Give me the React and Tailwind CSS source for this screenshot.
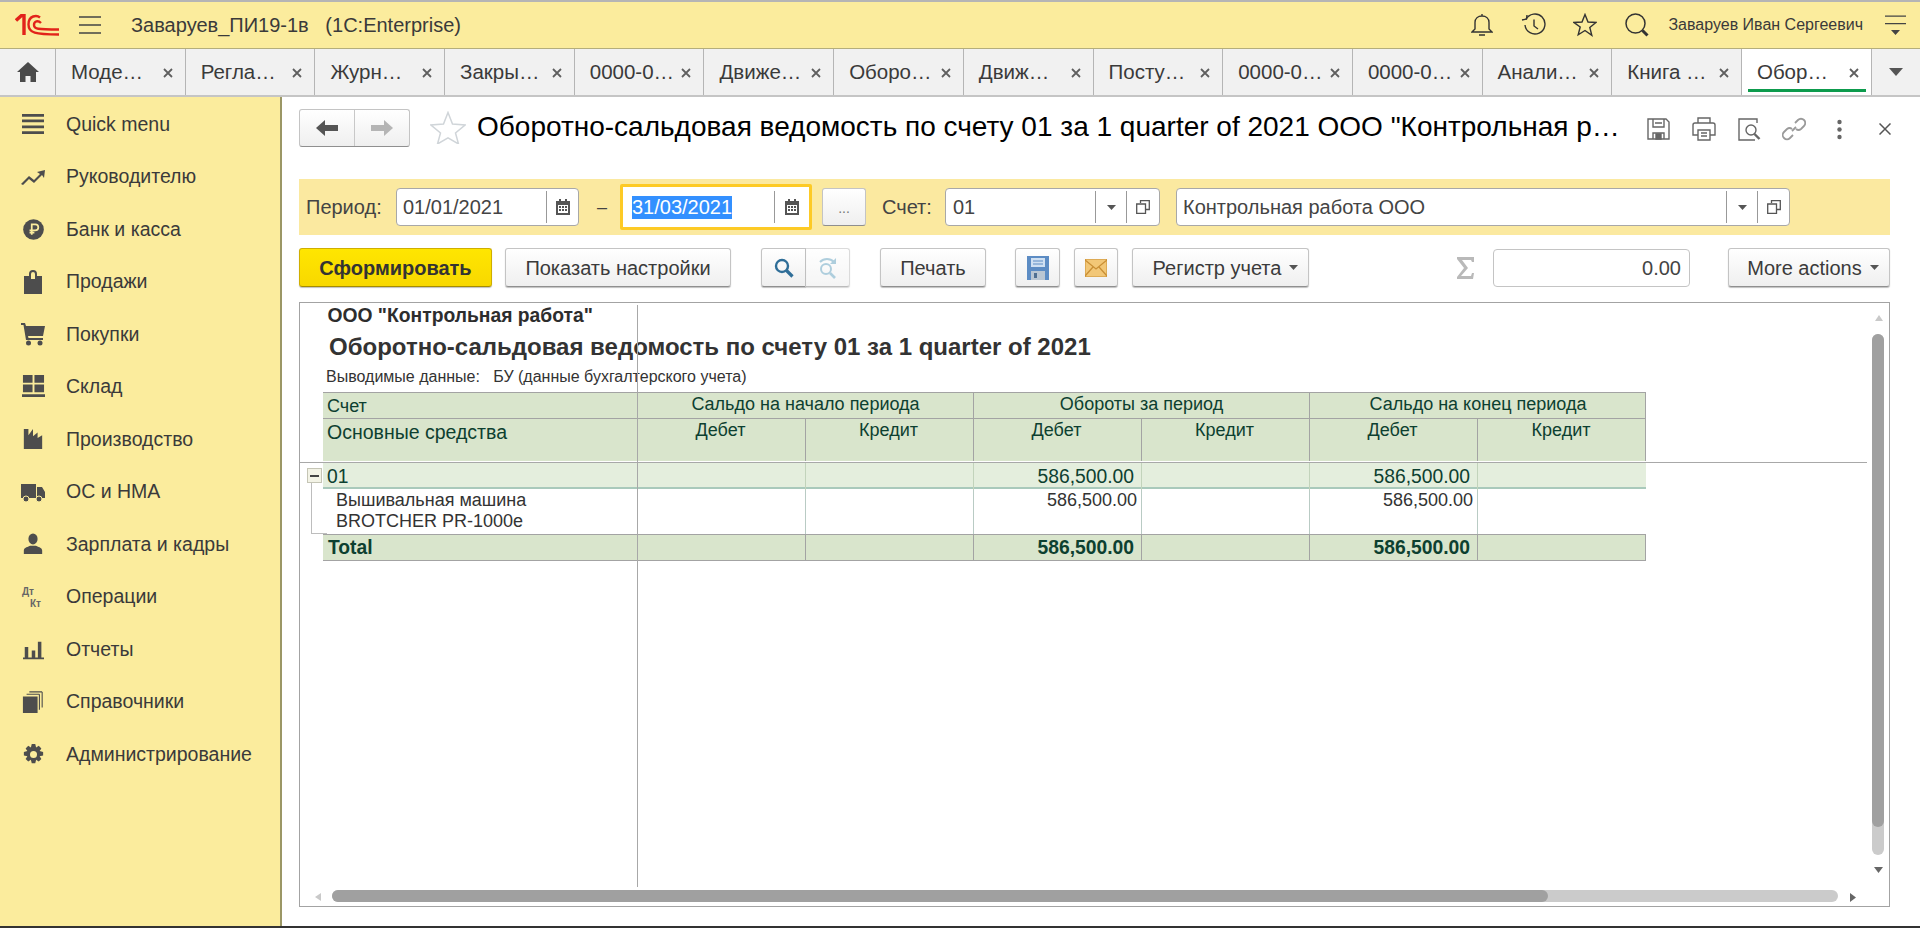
import React from 'react';

const FONT = { fontFamily: '"Liberation Sans", Arial, sans-serif' };

const tabs = ['Моде…', 'Регла…', 'Журн…', 'Закры…', '0000-0…', 'Движе…', 'Оборо…', 'Движ…', 'Посту…', '0000-0…', '0000-0…', 'Анали…', 'Книга …', 'Обор…'];

const IconWrap = ({ size = 24, children }) => (
  <svg viewBox="0 0 24 24" width={size} height={size} fill="#4d4d4d">{children}</svg>
);

const menu = [
  ['Quick menu', <IconWrap size={22}><path d="M0 1h24v3H0zM0 7h24v3H0zM0 13.500h24v3H0zM0 20h24v3H0z" /></IconWrap>],
  ['Руководителю', <IconWrap><path d="M0 19l8-8 5 4 6-6-3-2 8-2-1 8-2-3-8 8-5-4-6 6z" /></IconWrap>],
  ['Банк и касса', <IconWrap size={21}><circle cx="12" cy="12" r="11.800" /><path d="M10 18V6h4a3.500 3.500 0 0 1 0 7H7.500M7.500 15.500H13" fill="none" stroke="#fbec9d" strokeWidth="2" /></IconWrap>],
  ['Продажи', <IconWrap><path d="M3 6h5V4a4 4 0 0 1 8 0v2h5v18H3zM10 6v3h4V4a2 2 0 0 0-4 0z" fillRule="evenodd" /></IconWrap>],
  ['Покупки', <IconWrap><path d="M0 1h4l1 3h19l-2 10H7l.5 2H22v2H5L2.500 3H0z" /><circle cx="7.500" cy="21" r="2.500" /><circle cx="19" cy="21" r="2.500" /></IconWrap>],
  ['Склад', <IconWrap size={23}><path d="M1 0h10v8H1zM13 0h10v8H13zM1 10h10v8H1zM13 10h10v8H13zM0 20h24v3H0z" /></IconWrap>],
  ['Производство', <IconWrap size={22}><path d="M2 23V1h5v7l5-7v8l5-4v6l5-3v15z" /></IconWrap>],
  ['ОС и НМА', <IconWrap><path d="M0 4h15v14H0zM16 7h5l3 5v6h-8z" /><circle cx="5" cy="19" r="3" stroke="#fbec9d" /><circle cx="18" cy="19" r="3" stroke="#fbec9d" /></IconWrap>],
  ['Зарплата и кадры', <IconWrap size={22}><ellipse cx="12" cy="6.500" rx="5" ry="6" /><path d="M2 23v-4c0-3 5-4 7-5h6c2 1 7 2 7 5v4z" /></IconWrap>],
  ['Операции', <svg width="24" height="24" viewBox="0 0 24 24"><text x="1" y="10" fontSize="10" fontWeight="700" fill="#666" style={FONT}>Дт</text><text x="9" y="22" fontSize="10" fontWeight="700" fill="#666" style={FONT}>Кт</text></svg>],
  ['Отчеты', <IconWrap size={21}><path d="M2 9h4v12H2zM10 13h4v8h-4zM17 3h4v18h-4zM0 21h24v2H0z" /></IconWrap>],
  ['Справочники', <IconWrap size={22}><path d="M1 6h16v18H1z" /><path d="M19 3.500v17M22 1v17M5 3.500h14M8 1h14" fill="none" stroke="#4d4d4d" strokeWidth="1.200" /></IconWrap>],
  ['Администрирование', <IconWrap size={21}><path d="M10 0h4l1 4 3-2 3 3-2 3 4 1v4l-4 1 2 3-3 3-3-2-1 4h-4l-1-4-3 2-3-3 2-3-4-1v-4l4-1-2-3 3-3 3 2z" /><circle cx="12" cy="12" r="4" fill="#fbec9d" /></IconWrap>],
];

const Btn = ({ className = '', children }) => (
  <div className={`flex items-center justify-center h-[39px] shrink-0 rounded-[3px] border border-[#c4c4c4] border-b-[#8f8f8f] bg-gradient-to-b from-white to-[#efefef] shadow-[0_1px_1px_rgba(0,0,0,0.25)] text-[20px] text-[#3b3b3b] ${className}`}>
    {children}
  </div>
);

const Calendar = () => (
  <svg width="14" height="16" viewBox="0 0 14 16" fill="#555">
    <path d="M0 2h3V0h2v2h4V0h2v2h3v14H0zM2 6v8h10V6z" fillRule="evenodd" />
    <path d="M3 7h2v2H3zM6 7h2v2H6zM9 7h2v2H9zM3 10h2v2H3zM6 10h2v2H6zM9 10h2v2H9z" />
  </svg>
);

const CopyIcon = () => (
  <svg width="14" height="14" viewBox="0 0 14 14" fill="none" stroke="#555" strokeWidth="1.300">
    <path d="M4.500 3V.7h8.800v8.800H10" />
    <path d="M.7 4h8.800v9.300H.7z" />
  </svg>
);

const Caret = ({ color = '#555' }) => (
  <svg width="9" height="5" viewBox="0 0 9 5" fill={color}><path d="M0 0h9L4.500 5z" /></svg>
);

const Cell = ({ className = '', children }) => (
  <div className={`min-w-0 whitespace-nowrap overflow-visible ${className}`}>{children}</div>
);

export default function App() {
  return (
    <div style={FONT} className="w-[1920px] h-[928px] overflow-hidden flex flex-col bg-white text-[#333]">
      {/* шапка */}
      <header className="h-[49px] shrink-0 flex items-center bg-[#fbec9d] border-t-2 border-t-[#b5b5b5] border-b border-b-[#b4ae7c]">
        <svg className="ml-[15px] shrink-0" width="44" height="22" viewBox="0 0 44 22" fill="none" stroke="#e2231a">
          <path d="M1 6.500 6.500 1.500H9V21" strokeWidth="3.400" />
          <path d="M25 3.500C22 1 13.500 1 13.500 10.500C13.500 19 20 20.500 44 20.500" strokeWidth="2.400" />
          <path d="M26 9C23 6 19 7 19 11C19 15 22 15.500 44 15.500" strokeWidth="2.400" />
        </svg>
        <svg className="ml-[20px] shrink-0" width="22" height="18" viewBox="0 0 22 18" stroke="#444" strokeWidth="1.500"><path d="M0 1h22M0 9h22M0 17h22" /></svg>
        <span className="ml-[30px] text-[20px] whitespace-pre text-[#3a3a3a]">Заваруев_ПИ19-1в   (1С:Enterprise)</span>
        <div className="flex-1" />
        <svg width="22" height="24" viewBox="0 0 22 24" fill="none" stroke="#333" strokeWidth="1.400"><path d="M11 1v2M4 16V9.500C4 5.500 7 3 11 3s7 2.500 7 6.500V16l3 3H1zM8 22h6" /></svg>
        <svg className="ml-[28px]" width="25" height="24" viewBox="0 0 25 24" fill="none" stroke="#333" strokeWidth="1.400"><path d="M5 6.500A10 10 0 1 1 4 12" /><path d="M1 7l4.500-1L6 2" /><path d="M13 6.500V13l4 3" /></svg>
        <svg className="ml-[27px]" width="24" height="24" viewBox="0 0 24 24" fill="none" stroke="#333" strokeWidth="1.400"><path d="M12 1.500l3 7.500 8 .5-6.200 5 2 7.800L12 17.500l-6.800 4.300 2-7.800L1 9.500 9 9z" /></svg>
        <svg className="ml-[28px]" width="24" height="24" viewBox="0 0 24 24" fill="none" stroke="#333" strokeWidth="1.500"><circle cx="10.500" cy="10.500" r="9.500" /><path d="M17.500 17.500l5 5" strokeWidth="3" /></svg>
        <span className="ml-[19px] text-[16px] text-[#3a3a3a] whitespace-nowrap">Заваруев Иван Сергеевич</span>
        <svg className="ml-[22px] mr-[14px]" width="21" height="21" viewBox="0 0 21 21" fill="#444"><path d="M0 .5h21v1.300H0zM0 8h21v1.300H0zM6 15h9l-4.500 5z" /></svg>
      </header>

      {/* вкладки */}
      <nav className="h-[48px] shrink-0 flex bg-[#f1f1f1] border-b-2 border-b-[#c5c5c5]">
        <div className="w-[56px] shrink-0 flex items-center justify-center border-r border-r-[#b5b5b5]">
          <svg width="22" height="20" viewBox="0 0 22 20" fill="#4a4a4a"><path d="M11 0 22 10h-3v10h-5.500v-6h-5v6H3V10H0z" /></svg>
        </div>
        {tabs.map((t, i) => {
          const active = i === tabs.length - 1;
          return (
            <div key={i} className={`relative w-[129.700px] shrink-0 flex items-center pl-[15px] border-r border-r-[#b5b5b5] ${active ? 'bg-white' : ''}`}>
              <span className="text-[20.500px] text-[#3a3a3a] whitespace-nowrap">{t}</span>
              <svg className="absolute right-[12px] top-[19px]" width="10" height="10" viewBox="0 0 10 10" stroke="#5f5f5f" strokeWidth="1.800"><path d="M1 1l8 8M9 1l-8 8" /></svg>
              {active && <div className="absolute left-[6px] right-[5px] bottom-[3px] h-[3px] bg-[#0d9b4d]" />}
            </div>
          );
        })}
        <div className="flex-1 flex items-center justify-center"><svg width="14" height="8" viewBox="0 0 14 8" fill="#555"><path d="M0 0h14L7 8z" /></svg></div>
      </nav>

      <div className="flex-1 min-h-0 flex">
        {/* меню разделов */}
        <aside className="w-[282px] shrink-0 bg-[#fbec9d] border-r-2 border-r-[#9b9765] pt-[1px]">
          {menu.map(([label, icon]) => (
            <div key={label} className="h-[52.500px] flex items-center">
              <div className="w-[21px]" />
              <div className="w-[24px] flex items-center justify-center">{icon}</div>
              <span className="ml-[21px] text-[19.500px] text-[#3a3a3a] whitespace-nowrap">{label}</span>
            </div>
          ))}
        </aside>

        {/* форма отчета */}
        <main className="flex-1 min-w-0 pl-[17px] pr-[30px] flex flex-col">
          <div className="h-[82px] shrink-0 flex items-start">
            <div className="mt-[12px] w-[111px] h-[38px] flex rounded-[3px] border border-[#c4c4c4] border-b-[#8f8f8f] bg-gradient-to-b from-white to-[#efefef]">
              <div className="w-[55px] flex items-center justify-center border-r border-r-[#c8c8c8]">
                <svg width="22" height="16" viewBox="0 0 22 16" fill="#555"><path d="M9 0v5h13v6H9v5L0 8z" /></svg>
              </div>
              <div className="flex-1 flex items-center justify-center">
                <svg width="22" height="16" viewBox="0 0 22 16" fill="#b5b5b5"><path d="M13 0v5H0v6h13v5l9-8z" /></svg>
              </div>
            </div>
            <svg className="ml-[20px] mt-[14px] shrink-0" width="36" height="33" viewBox="0 0 36 33" fill="none" stroke="#d0d5d9" strokeWidth="1.500"><path d="M18 1.500l4.500 11.500 12.500 1-9.500 8 3 11-10.500-6.200L7.500 33l3-11L1 14l12.500-1z" /></svg>
            <h1 className="ml-[11px] mt-[13px] text-[28px] leading-[34px] font-normal text-black whitespace-nowrap">Оборотно-сальдовая ведомость по счету 01 за 1 quarter of 2021 ООО "Контрольная р…</h1>
            <div className="flex-1" />
            <div className="mt-[20px] flex items-center -mr-[1px]">
              <svg width="23" height="22" viewBox="0 0 23 22" fill="none" stroke="#666" strokeWidth="1.400"><path d="M1 1h18l3 3v17H1zM6 1v8h11V1M8 5h7M6 21v-6h11v6" /><path d="M9 16h5v5H9z" fill="#666" /></svg>
              <svg className="ml-[22px]" width="24" height="24" viewBox="0 0 24 24" fill="none" stroke="#666" strokeWidth="1.400"><path d="M6 6V1h12v5M6 18H1V8a2 2 0 0 1 2-2h18a2 2 0 0 1 2 2v10h-5" /><path d="M6 13h12v10H6zM9 16h6M9 19h6" /></svg>
              <svg className="ml-[22px]" width="24" height="23" viewBox="0 0 24 23" fill="none" stroke="#666" strokeWidth="1.400"><path d="M19 5V1H1v21h16" /><circle cx="13" cy="12" r="5" /><path d="M16.500 16l5 5" strokeWidth="2.400" /></svg>
              <svg className="ml-[20px]" width="24" height="24" viewBox="0 0 24 24" fill="none" stroke="#9a9a9a" strokeWidth="1.800"><path d="M10 14l4-4M13 6l3-3a4 4 0 0 1 6 6l-3 3a4 4 0 0 1-5 0M11 18l-3 3a4 4 0 0 1-6-6l3-3a4 4 0 0 1 5 0" /></svg>
              <svg className="ml-[31px]" width="5" height="21" viewBox="0 0 5 21" fill="#666"><circle cx="2.500" cy="3" r="2.200" /><circle cx="2.500" cy="10.500" r="2.200" /><circle cx="2.500" cy="18" r="2.200" /></svg>
              <svg className="ml-[37px]" width="12" height="12" viewBox="0 0 12 12" stroke="#555" strokeWidth="1.500"><path d="M.5.5l11 11M11.500.5l-11 11" /></svg>
            </div>
          </div>

          {/* отбор */}
          <div className="h-[56px] shrink-0 flex items-center bg-[#fbe9a0] pl-[7px]">
            <span className="w-[90px] text-[20px] text-[#444]">Период:</span>
            <div className="w-[183px] h-[38px] flex rounded-[4px] border border-[#a8a8a8] bg-white">
              <div className="w-[150px] pl-[6px] flex items-center border-r border-r-[#999] text-[20px] text-[#444] my-[2px]">01/01/2021</div>
              <div className="flex-1 flex items-center justify-center"><Calendar /></div>
            </div>
            <span className="ml-[18px] w-[23px] text-[18px] text-[#444]">–</span>
            <div className="w-[192px] h-[46px] flex rounded-[2px] border-[3px] border-[#fdca25] bg-white">
              <div className="w-[152px] pl-[9px] flex items-center border-r border-r-[#999] my-[4px]">
                <span className="bg-[#3390ff] text-white text-[20px] leading-[23px] px-0">31/03/2021</span>
              </div>
              <div className="flex-1 flex items-center justify-center"><Calendar /></div>
            </div>
            <div className="ml-[10px] w-[44px] h-[38px] flex items-end justify-center pb-[6px] rounded-[3px] border border-[#c4c4c4] border-b-[#8f8f8f] bg-gradient-to-b from-white to-[#efefef] text-[14px] text-[#777]">...</div>
            <span className="ml-[16px] w-[63px] text-[20px] text-[#444]">Счет:</span>
            <div className="w-[215px] h-[38px] flex rounded-[4px] border border-[#a8a8a8] bg-white">
              <div className="w-[150px] pl-[7px] flex items-center border-r border-r-[#999] my-[2px] text-[20px] text-[#444]">01</div>
              <div className="w-[31px] flex items-center justify-center border-r border-r-[#999] my-[2px]"><Caret /></div>
              <div className="flex-1 flex items-center justify-center"><CopyIcon /></div>
            </div>
            <div className="ml-[16px] w-[614px] h-[38px] flex rounded-[4px] border border-[#a8a8a8] bg-white">
              <div className="w-[550px] pl-[6px] flex items-center border-r border-r-[#999] my-[2px] text-[20px] text-[#444]">Контрольная работа ООО</div>
              <div className="w-[31px] flex items-center justify-center border-r border-r-[#999] my-[2px]"><Caret /></div>
              <div className="flex-1 flex items-center justify-center"><CopyIcon /></div>
            </div>
          </div>

          {/* кнопки */}
          <div className="h-[67px] shrink-0 flex items-start pt-[13px]">
            <div className="w-[193px] h-[39px] flex items-center justify-center rounded-[3px] border border-[#cfae00] border-b-[#a58c00] bg-gradient-to-b from-[#ffe600] to-[#f8d800] shadow-[0_1px_1px_rgba(0,0,0,0.25)] text-[20px] font-bold text-[#333]">Сформировать</div>
            <Btn className="ml-[13px] w-[226px]">Показать настройки</Btn>
            <Btn className="ml-[30px] w-[45px] rounded-r-none">
              <svg width="20" height="20" viewBox="0 0 20 20" fill="none" stroke="#2f6e98" strokeWidth="2.400"><circle cx="8" cy="8" r="6" /><path d="M12.500 12.500l6 6" strokeWidth="3.200" /></svg>
            </Btn>
            <Btn className="w-[44px] rounded-l-none border-l-0 opacity-60">
              <svg width="22" height="22" viewBox="0 0 22 22" fill="none" stroke="#7aaec8" strokeWidth="2"><circle cx="9" cy="12" r="5" /><path d="M13 16l5 5" strokeWidth="2.600" /><path d="M3 5C7 1 13 1 17 5" /><path d="M19 1v6h-6" fill="#7aaec8" stroke="none" /></svg>
            </Btn>
            <Btn className="ml-[30px] w-[106px]">Печать</Btn>
            <Btn className="ml-[29px] w-[45px]">
              <svg width="22" height="24" viewBox="0 0 22 24"><path d="M0 0h22v24H0z" fill="#5c8cc4" /><path d="M4 2h14v9H4z" fill="#cfe0f2" /><path d="M6 5h10M6 8h10" stroke="#5c8cc4" /><path d="M4 15h14v9H4z" fill="#b9c6d3" /><path d="M7 17h3v5H7z" fill="#4f6f92" /></svg>
            </Btn>
            <Btn className="ml-[14px] w-[44px]">
              <svg width="22" height="18" viewBox="0 0 22 18"><path d="M0 0h22v18H0z" fill="#f2c777" stroke="#c98f35" /><path d="M0 1l11 9 11-9M0 17l8-9M22 17l-8-9" fill="none" stroke="#c98f35" strokeWidth="1.300" /></svg>
            </Btn>
            <Btn className="ml-[14px] w-[177px] pl-[10px]">
              <span>Регистр учета</span>
              <span className="ml-[8px]"><Caret /></span>
            </Btn>
            <svg className="ml-[148px] mt-[9px] shrink-0" width="18" height="22" viewBox="0 0 18 22" fill="#b9b9b9"><path d="M0 0h17v5h-2l-1-2H5l6 8-7 8h10l1-3h2l-1 6H0v-2l7-9-7-9z" /></svg>
            <div className="ml-[18px] w-[197px] h-[38px] mt-[1px] flex items-center justify-end pr-[8px] rounded-[4px] border border-[#c4c4c4] text-[20px] text-[#444]">0.00</div>
            <Btn className="ml-[38px] w-[162px] pl-[8px]">
              <span>More actions</span>
              <span className="ml-[8px]"><Caret /></span>
            </Btn>
          </div>

          {/* табличный документ */}
          <section className="relative mb-[19px] flex-1 min-h-0 w-[1591px] border border-[#a3a3a3] overflow-hidden">
            <div className="pl-[27.500px] pt-[1px] text-[19.300px] leading-[24px] font-bold text-[#2d2d2d] whitespace-nowrap">ООО "Контрольная работа"</div>
            <div className="pl-[29px] mt-[4px] text-[24px] leading-[30px] font-bold text-[#333] whitespace-nowrap">Оборотно-сальдовая ведомость по счету 01 за 1 quarter of 2021</div>
            <div className="pl-[26px] mt-[5px] text-[16px] leading-[20px] text-[#333] whitespace-pre">Выводимые данные:   БУ (данные бухгалтерского учета)</div>
            <div className="ml-[23px] mt-[5px] w-[1323px] text-[#0d4030] text-[18px]">
              {/* шапка таблицы */}
              <div className="grid grid-cols-[314px_336px_336px_337px] h-[26px] bg-[#d9e5cc] border-t border-[#a3a3a3] border-r">
                <Cell className="pl-[4px] leading-[27px]">Счет</Cell>
                <Cell className="text-center leading-[23px] border-l border-[#a3a3a3]">Сальдо на начало периода</Cell>
                <Cell className="text-center leading-[23px] border-l border-[#a3a3a3]">Обороты за период</Cell>
                <Cell className="text-center leading-[23px] border-l border-[#a3a3a3]">Сальдо на конец периода</Cell>
              </div>
              <div className="grid grid-cols-[314px_168px_168px_168px_168px_168px_169px] h-[43px] bg-[#d9e5cc] border-t border-[#a3a3a3] border-r">
                <Cell className="pl-[4px] text-[19.500px] leading-[27px]">Основные средства</Cell>
                {['Дебет', 'Кредит', 'Дебет', 'Кредит', 'Дебет', 'Кредит'].map((h, i) => (
                  <Cell key={i} className="text-center leading-[22px] pr-[2px] border-l border-[#a3a3a3]">{h}</Cell>
                ))}
              </div>
              {/* группа */}
              <div className="grid grid-cols-[314px_168px_168px_168px_168px_168px_169px] h-[26px] mt-[2px] bg-[#e4eedd] border-b-2 border-[#a9c9bb] text-[19.300px]">
                <Cell className="pl-[4px] leading-[27px]">01</Cell>
                <Cell className="border-l border-[#c2d3bb]" />
                <Cell className="border-l border-[#c2d3bb]" />
                <Cell className="border-l border-[#c2d3bb] text-right pr-[7px] leading-[27px]">586,500.00</Cell>
                <Cell className="border-l border-[#c2d3bb]" />
                <Cell className="border-l border-[#c2d3bb] text-right pr-[7px] leading-[27px]">586,500.00</Cell>
                <Cell className="border-l border-[#c2d3bb]" />
              </div>
              {/* строка */}
              <div className="grid grid-cols-[314px_168px_168px_168px_168px_168px_169px] h-[45px] pt-[1px] text-[18px] text-[#333]">
                <Cell className="pl-[13px] leading-[21px]">Вышивальная машина<br />BROTCHER PR-1000e</Cell>
                <Cell className="border-l border-[#b9cbc4]" />
                <Cell className="border-l border-[#b9cbc4]" />
                <Cell className="border-l border-[#b9cbc4] text-right pr-[4px] leading-[21px]">586,500.00</Cell>
                <Cell className="border-l border-[#b9cbc4]" />
                <Cell className="border-l border-[#b9cbc4] text-right pr-[4px] leading-[21px]">586,500.00</Cell>
                <Cell className="border-l border-[#b9cbc4]" />
              </div>
              {/* итого */}
              <div className="grid grid-cols-[314px_168px_168px_168px_168px_168px_169px] h-[27px] bg-[#d9e5cc] border-t border-b border-r border-[#a3a3a3] font-bold text-[19.300px]">
                <Cell className="pl-[5px] leading-[26px]">Total</Cell>
                <Cell className="border-l border-[#a3a3a3]" />
                <Cell className="border-l border-[#a3a3a3]" />
                <Cell className="border-l border-[#a3a3a3] text-right pr-[7px] leading-[26px]">586,500.00</Cell>
                <Cell className="border-l border-[#a3a3a3]" />
                <Cell className="border-l border-[#a3a3a3] text-right pr-[7px] leading-[26px]">586,500.00</Cell>
                <Cell className="border-l border-[#a3a3a3]" />
              </div>
            </div>

            {/* линии закрепления поверх таблицы */}
            <div className="absolute left-[337px] top-[2px] h-[582px] w-[1px] bg-[#a8a8a8]" />
            <div className="absolute left-0 top-[159px] h-[1px] w-[1567px] bg-[#a8a8a8]" />

            {/* дерево группировки */}
            <div className="absolute left-[11px] top-[179px] w-[1px] h-[51px] bg-[#bdbdbd]" />
            <div className="absolute left-[11px] top-[230px] w-[16px] h-[1px] bg-[#bdbdbd]" />
            <div className="absolute left-[7px] top-[165px] w-[15px] h-[15px] flex items-center justify-center border border-[#c5c5b5] bg-[#f3f3e6]">
              <div className="w-[9px] h-[2px] bg-[#444]" />
            </div>

            {/* полосы прокрутки */}
            <svg className="absolute left-[1575px] top-[12px]" width="8" height="6" viewBox="0 0 8 6" fill="#c9c9c9"><path d="M4 0l4 6H0z" /></svg>
            <div className="absolute left-[1572px] top-[31px] w-[12px] h-[521px] rounded-[6px] bg-[#cbcbcb]">
              <div className="w-[12px] h-[493px] rounded-[6px] bg-[#a0a0a0]" />
            </div>
            <svg className="absolute left-[1574px] top-[564px]" width="9" height="6" viewBox="0 0 9 6" fill="#666"><path d="M0 0h9L4.500 6z" /></svg>
            <svg className="absolute left-[15px] top-[590px]" width="6" height="8" viewBox="0 0 6 8" fill="#c9c9c9"><path d="M0 4l6-4v8z" /></svg>
            <div className="absolute left-[32px] top-[587px] w-[1506px] h-[12px] rounded-[6px] bg-[#cbcbcb]">
              <div className="w-[1216px] h-[12px] rounded-[6px] bg-[#a0a0a0]" />
            </div>
            <svg className="absolute left-[1550px] top-[590px]" width="6" height="9" viewBox="0 0 6 9" fill="#666"><path d="M0 0l6 4.500L0 9z" /></svg>
          </section>
        </main>
      </div>

      <div className="h-[2px] shrink-0 bg-[#333]" />
    </div>
  );
}
